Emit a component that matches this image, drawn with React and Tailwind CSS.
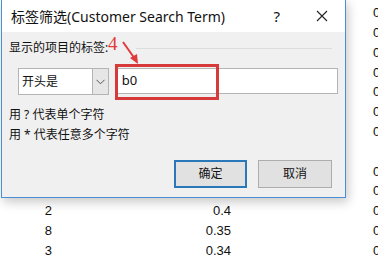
const rows = [
  { a: '', b: '', c: '0.3' },
  { a: '', b: '', c: '0.3' },
  { a: '', b: '', c: '0.3' },
  { a: '', b: '', c: '0.3' },
  { a: '', b: '', c: '0.3' },
  { a: '', b: '', c: '0.3' },
  { a: '', b: '', c: '0.3' },
  { a: '', b: '', c: '' },
  { a: '', b: '', c: '0.3' },
  { a: '', b: '', c: '0.3' },
  { a: '2', b: '0.4', c: '0.3' },
  { a: '8', b: '0.35', c: '0.3' },
  { a: '3', b: '0.34', c: '0.3' },
];

const ui = { fontFamily: '"Noto Sans", "Noto Sans CJK SC", sans-serif' };

export default function App() {
  return (
    <div className="relative w-[378px] h-[256px] overflow-hidden bg-white">
      {/* sheet behind the dialog */}
      <div className="flex flex-col pt-[3px] text-[13px] text-[#111]" style={{ fontFamily: '"Liberation Sans", sans-serif' }}>
        {rows.map((r, i) => (
          <div key={i} className="flex h-[19.8px] items-center">
            <div className="w-[52px] text-right">{r.a}</div>
            <div className="w-[179px] text-right">{r.b}</div>
            <div className="ml-[142px] w-[5px] overflow-visible whitespace-nowrap">{r.c}</div>
          </div>
        ))}
      </div>

      {/* dialog */}
      <div
        className="absolute left-[1px] top-[-1px] w-[345px] h-[199px] border border-[#4a8fd6] bg-[#f0f0f0] shadow-[2px_4px_10px_rgba(0,0,0,0.22)] flex flex-col"
        style={ui}
      >
        <div className="h-[32px] bg-white flex items-center pl-[9px] pr-[14px] text-[14px] text-[#111]">
          <span className="flex-1">标签筛选(Customer Search Term)</span>
          <span className="mr-[36px] text-[15px]">?</span>
          <svg width="12" height="12" viewBox="0 0 12 12" className="mr-[3px]">
            <path d="M1 1 L11 11 M11 1 L1 11" stroke="#222" strokeWidth="1.1" />
          </svg>
        </div>

        <div className="flex-1 px-[7px] text-[12px] text-[#111]">
          <div className="flex items-center mt-[8px] h-[16px]">
            <span>显示的项目的标签:</span>
            <div className="flex-1 ml-[28px] mr-[6px] h-px bg-[#dcdcdc]" />
          </div>

          <div className="flex mt-[12px] pl-[9px] h-[27px]">
            <div className="w-[91px] h-[27px] flex bg-white border border-[#b4b4b4]">
              <div className="flex-1 flex items-center pl-[3px]">开头是</div>
              <div className="w-[16px] bg-[#e6e6e6] border-l border-[#b4b4b4] flex items-center justify-center">
                <svg width="9" height="6" viewBox="0 0 9 6">
                  <path d="M0.5 0.8 L4.5 4.8 L8.5 0.8" stroke="#555" strokeWidth="1" fill="none" />
                </svg>
              </div>
            </div>
            <div className="ml-[7px] w-[223px] h-[26px] bg-white border border-[#b4b4b4] flex items-center pl-[5px] text-[13px]">
              b0
            </div>
          </div>

          <div className="mt-[11px] h-[18px] flex items-center">用 ? 代表单个字符</div>
          <div className="mt-[2px] h-[18px] flex items-center">用 * 代表任意多个字符</div>

          <div className="flex justify-end mt-[16px] pr-[6px] gap-[11px]">
            <div className="w-[73px] h-[28px] bg-[#e1e1e1] border-2 border-[#2a78b9] flex items-center justify-center">确定</div>
            <div className="w-[74px] h-[28px] bg-[#e1e1e1] border border-[#adadad] flex items-center justify-center">取消</div>
          </div>
        </div>
      </div>

      {/* annotation */}
      <div className="absolute left-[108px] top-[34px] text-[19px] leading-none text-[#e03a3a]" style={{ fontFamily: '"Liberation Serif", serif' }}>
        4
      </div>
      <svg className="absolute left-[118px] top-[38px]" width="28" height="30" viewBox="0 0 28 30">
        <path d="M5 4 L17 21" stroke="#e03a3a" strokeWidth="2" />
        <path d="M20 26 L12 20 L19 16 Z" fill="#e03a3a" />
      </svg>
      <div className="absolute left-[115px] top-[64px] w-[104px] h-[36px] border-[3px] border-[#d63a3a]" />
    </div>
  );
}
